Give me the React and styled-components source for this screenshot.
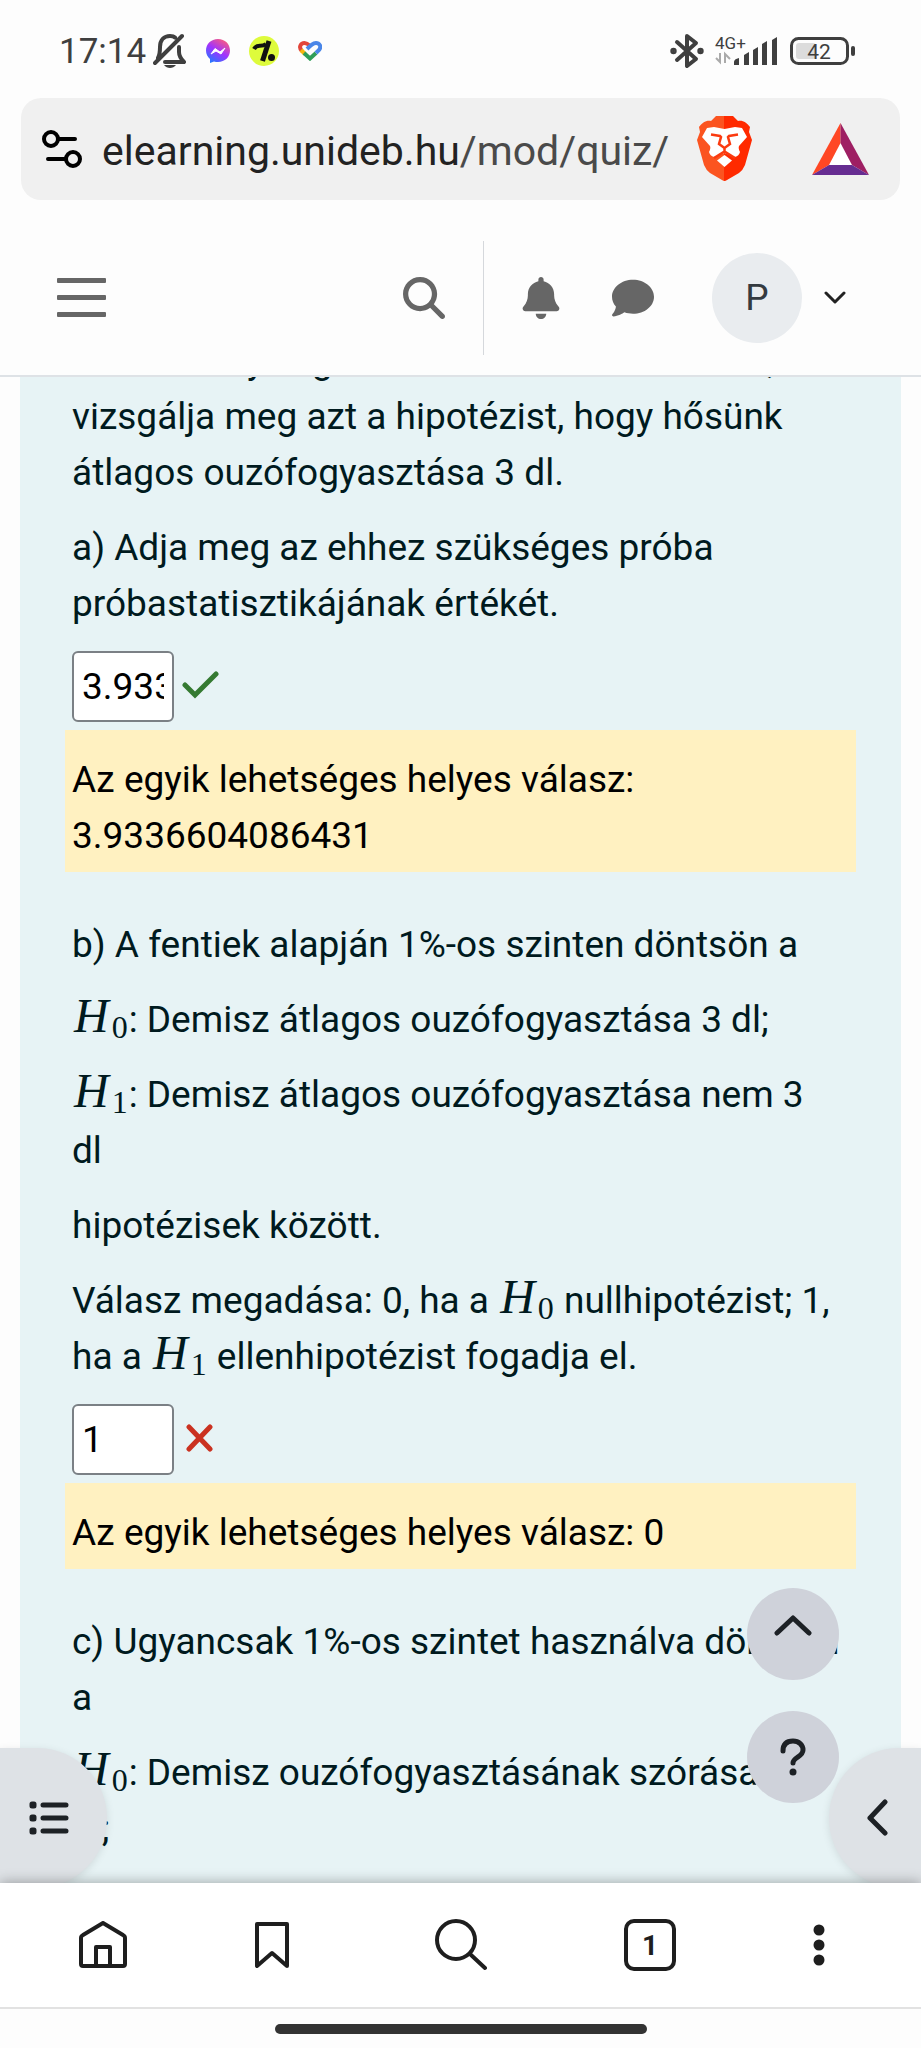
import React from "react";
import styled, { createGlobalStyle } from "styled-components";
import { FaBell, FaComment, FaMagnifyingGlass } from "react-icons/fa6";

const Global = createGlobalStyle`
  *, *::before, *::after { box-sizing: border-box; }
  body { margin: 0; background: #fdfdfd; font-family: Roboto, "Liberation Sans", sans-serif; }
  button, input { font: inherit; color: inherit; }
  button { border: 0; padding: 0; background: none; cursor: pointer; }
`;

const Screen = styled.div`
  height: 100vh;
  display: flex;
  flex-direction: column;
  overflow: hidden;
`;

const StatusBar = styled.div`
  display: flex;
  align-items: center;
  justify-content: space-between;
  height: 98px;
  padding: 4px 66px 0 59px;
  color: #3f3f3f;
`;

const StatusGroup = styled.div`
  display: flex;
  align-items: center;
  gap: ${(p) => p.$gap}px;
`;

const Clock = styled.time`
  padding-top: 2px;
  font-size: 35px;
  line-height: 40px;
`;

const AddressBar = styled.div`
  display: flex;
  align-items: center;
  height: 102px;
  margin: 0 21px;
  padding: 0 31px 0 21px;
  border-radius: 20px;
  background: #f0f0f0;
`;

const Address = styled.div`
  flex: 1;
  min-width: 0;
  margin-left: 20px;
  padding-top: 4px;
  overflow: hidden;
  white-space: nowrap;
  font-size: 41px;
  line-height: 50px;
  color: #4a4a4a;
  b { font-weight: 400; color: #222; }
`;

const Logo = styled.button`
  display: flex;
  margin-left: ${(p) => p.$space}px;
`;

const SiteHeader = styled.header`
  display: flex;
  align-items: center;
  flex: none;
  height: 177px;
  padding: 20px 75px 0 57px;
  border-bottom: 2px solid #dee2e6;
  color: #666;
`;

const Burger = styled.button`
  display: flex;
  flex-direction: column;
  gap: 12px;
  width: 49px;
  margin-right: auto;
  i { height: 5px; border-radius: 1px; background: #666; }
`;

const HeaderButton = styled.button`
  display: flex;
  align-items: center;
`;

const Notifications = styled.div`
  display: flex;
  gap: 50px;
`;

const Divider = styled.span`
  width: 1px;
  height: 114px;
  margin: 0 36px 0 38px;
  background: #d5d8dc;
`;

const UserMenu = styled(HeaderButton)`
  gap: 22px;
  margin-left: 58px;
  color: #222;
`;

const Avatar = styled.span`
  width: 90px;
  height: 90px;
  border-radius: 50%;
  background: #e9ecef;
  color: #343a40;
  font-size: 37px;
  line-height: 90px;
  text-align: center;
`;

const Viewport = styled.main`
  position: relative;
  flex: 1;
  min-height: 0;
  overflow: hidden;
`;

const Question = styled.article`
  min-height: 100%;
  margin: -44px 20px 0;
  padding: 0 60px 90px 52px;
  background: #e7f3f5;
  color: #001a1e;
  font-size: 37px;
  line-height: 56px;
`;

const Paragraph = styled.p`
  margin: 0 0 19px;
`;

const MathTerm = styled.span`
  padding-left: 2px;
  font: italic 48px/40px "Liberation Serif", serif;
  sub {
    margin: 0 1px 0 3px;
    font-style: normal;
    font-size: 32px;
    line-height: 1px;
    vertical-align: -6px;
  }
`;

const AnswerRow = styled.div`
  display: flex;
  align-items: center;
  gap: 8px;
  margin-bottom: 8px;
`;

const AnswerInput = styled.input`
  width: 102px;
  height: 71px;
  padding: 0 8px;
  border: 2px solid #7b8085;
  border-radius: 6px;
  background: #fff;
  color: #000;
`;

const Feedback = styled.div`
  margin: 0 -15px 45px -7px;
  padding: 22px 7px 8px;
  background: #fff1c1;
  color: #000;
`;

const RoundButton = styled.button`
  display: flex;
  align-items: center;
  justify-content: center;
  width: 92px;
  height: 92px;
  border-radius: 50%;
  background: #cfd2da;
  color: #1d2125;
`;

const FloatingStack = styled.div`
  position: absolute;
  right: 82px;
  bottom: 80px;
  display: grid;
  gap: 31px;
`;

const DrawerTab = styled.button`
  position: absolute;
  bottom: -5px;
  ${(p) => p.$side}: 0;
  display: flex;
  align-items: center;
  justify-content: ${(p) => (p.$side === "left" ? "flex-end" : "flex-start")};
  width: ${(p) => (p.$side === "left" ? 107 : 92)}px;
  height: 140px;
  padding: 0 38px;
  border-radius: ${(p) => (p.$side === "left" ? "0 70px 70px 0" : "70px 0 0 70px")};
  background: #dee2e6;
  box-shadow: 0 2px 8px rgba(0, 0, 0, 0.1);
  color: #1d2125;
  svg { flex: none; }
`;

const BrowserNav = styled.nav`
  position: relative;
  display: grid;
  grid-template-columns: 205fr 133fr 245fr 134fr 204fr;
  flex: none;
  height: 126px;
  border-bottom: 2px solid #e2e2e2;
  background: #fff;
  box-shadow: 0 -1px 12px rgba(0, 0, 0, 0.3);
`;

const NavButton = styled.button`
  display: flex;
  align-items: center;
  justify-content: center;
  color: #1e1e1e;
`;

const TabCount = styled.span`
  width: 52px;
  height: 52px;
  border: 4px solid #1e1e1e;
  border-radius: 10px;
  font-size: 28px;
  font-weight: 700;
  line-height: 46px;
  text-align: center;
`;

const GestureArea = styled.div`
  position: relative;
  display: flex;
  align-items: center;
  justify-content: center;
  flex: none;
  height: 39px;
  background: #fdfdfd;
`;

const GestureHandle = styled.span`
  width: 372px;
  height: 10px;
  border-radius: 5px;
  background: #333;
`;

const Stroke = ({ w, h, width = 4, children }) => (
  <svg width={w} height={h} viewBox={`0 0 ${w} ${h}`} fill="none" stroke="currentColor"
    strokeWidth={width} strokeLinecap="round" strokeLinejoin="round" aria-hidden="true">
    {children}
  </svg>
);

const MutedBell = () => (
  <Stroke w={34} h={36} width={4}>
    <path d="M2 30L29 3M5 25C7 21 7 18 7 14C7 7 11 3 17 3C19 3 21 3.500 22 4.500M26 14V19C26 23 27 25 31 29H12" />
    <path d="M11 32H23C20 36 14 36 11 32Z" fill="currentColor" stroke="none" />
  </Stroke>
);

const Messenger = () => (
  <svg width="24" height="24" viewBox="0 0 24 24" aria-hidden="true">
    <defs>
      <linearGradient id="msg" x1="0.2" y1="1" x2="0.8" y2="0">
        <stop offset="0" stopColor="#1f7bff" />
        <stop offset="0.5" stopColor="#a033ff" />
        <stop offset="1" stopColor="#ff5d78" />
      </linearGradient>
    </defs>
    <path fill="url(#msg)" d="M12 0C5 0 0 5 0 11.500C0 15 1.500 18 4 20V24L8 22.500C9.300 22.900 10.600 23 12 23C19 23 24 18 24 11.500S19 0 12 0Z" />
    <path d="M5 15L9 9.500L14 13L19 9L15 15L10 12Z" fill="#fff" stroke="#fff" strokeLinejoin="round" />
  </svg>
);

const LimeBadge = () => (
  <svg width="30" height="30" viewBox="0 0 30 30" fill="none" stroke="#111" aria-hidden="true">
    <circle cx="15" cy="15" r="15" fill="#defb3c" stroke="none" />
    <path d="M5 13C8 7 12 12 17 8" strokeWidth="4" />
    <path d="M20 5L13.500 25" strokeWidth="5" />
    <circle cx="22.500" cy="21.500" r="3.500" fill="#111" stroke="none" />
  </svg>
);

const HeartBadge = () => (
  <svg width="24" height="20" viewBox="0 0 24 20" fill="none" strokeWidth="4" aria-hidden="true">
    <path d="M4 10C0 6 3 2 6.500 2C9 2 11 4 12 5" stroke="#e2453a" />
    <path d="M3 9L7 13" stroke="#f6b70e" />
    <path d="M6 12L12 17.500L18 12" stroke="#2f9e58" />
    <path d="M18 12L21 9C24 5 21 2 18 2C15 2 13 4 9 8" stroke="#4a86e8" />
  </svg>
);

const Bluetooth = () => (
  <Stroke w={34} h={36} width={4}>
    <path d="M7 9L26 26L17 33V3L26 10L7 27" />
    <circle cx="3.500" cy="18" r="1.200" fill="currentColor" />
    <circle cx="30.500" cy="18" r="1.200" fill="currentColor" />
  </Stroke>
);

const Signal = () => (
  <svg width="64" height="32" viewBox="0 0 64 32" fill="#3f3f3f" overflow="visible" aria-hidden="true">
    <text x="0" y="14" fontSize="17" fontFamily="Roboto, sans-serif">4G+</text>
    <path d="M5 18V27L1 23M10 28V19L15 24" fill="none" stroke="#aaa" strokeWidth="2" />
    <path d="M19 30V27Q19 24 24 23V30ZM29 20L34 17V30H29ZM38 15L43 12V30H38ZM47 9L52 6V30H47ZM57 5L62 2V30H57Z" />
  </svg>
);

const Battery = () => (
  <svg width="65" height="28" viewBox="0 0 65 28" aria-hidden="true">
    <rect x="1.500" y="1.500" width="56" height="25" rx="7" fill="none" stroke="#3f3f3f" strokeWidth="3" />
    <rect x="6" y="6" width="20" height="16" rx="3" fill="#dcdcdc" />
    <rect x="61" y="9" width="4" height="10" rx="2" fill="#3f3f3f" />
    <text x="29" y="22" fontSize="21" textAnchor="middle" fill="#3f3f3f" fontFamily="Roboto, sans-serif">42</text>
  </svg>
);

const Brave = () => (
  <svg width="55" height="66" viewBox="0 0 55 66" aria-hidden="true">
    <defs>
      <linearGradient id="brave">
        <stop offset="0.5" stopColor="#fb5420" />
        <stop offset="0.5" stopColor="#ff2a00" />
      </linearGradient>
    </defs>
    <path fill="url(#brave)" d="M19 0H36L41 5C46 4 50 7 53 11L52 16L55 24L48 49Q46 54 42 57L30 64Q27.500 66 25 64L13 57Q9 54 7 49L0 24L3 16L2 11C5 7 9 4 14 5Z" />
    <path fill="#fff" d="M17 11L27.500 13L38 11L45 12L50 21L42 30Q41 32 43 36Q42 40 38 41L27.500 37L17 41Q13 40 12 36Q14 32 13 30L5 21L10 12Z" />
    <path fill="none" stroke="#fb3b10" strokeWidth="2.500" d="M14 18.500L23 20L24 21L22 28L27.500 32L33 28L31 21L32 20L41 18.500M27.500 32V36M17 42L27.500 35.500L38 42" />
    <path fill="#fff" d="M27.500 39L35 44.500L27.500 51L20 44.500Z" />
  </svg>
);

const BatTriangle = () => (
  <svg width="57" height="52" viewBox="0 0 57 52" aria-hidden="true">
    <path fill="#fff" d="M28.500 20L40 42H17Z" />
    <path fill="#ff4724" d="M28.500 0V20L17 42L0 52Z" />
    <path fill="#9e1f63" d="M28.500 0V20L40 42L57 52Z" />
    <path fill="#662d91" d="M0 52L17 42H40L57 52Z" />
  </svg>
);

const H = ({ n }) => <MathTerm>H<sub>{n}</sub></MathTerm>;

function Answer({ id, label, value, correct }) {
  return (
    <AnswerRow>
      <AnswerInput id={id} aria-label={label} defaultValue={value} readOnly />
      {correct ? (
        <svg width="37" height="32" viewBox="0 0 37 32" fill="none" stroke="#357a32" strokeWidth="5" strokeLinecap="round" role="img" aria-label="Helyes">
          <path d="M3 14L13 24L34 3" />
        </svg>
      ) : (
        <svg width="37" height="32" viewBox="0 0 37 32" fill="none" stroke="#ca3120" strokeWidth="5" strokeLinecap="round" role="img" aria-label="Hibás">
          <path d="M7 3L28 25M28 3L7 25" />
        </svg>
      )}
    </AnswerRow>
  );
}

export default function App() {
  return (
    <Screen>
      <Global />
      <StatusBar>
        <StatusGroup $gap={19}>
          <StatusGroup $gap={7}>
            <Clock>17:14</Clock>
            <MutedBell />
          </StatusGroup>
          <Messenger />
          <LimeBadge />
          <HeartBadge />
        </StatusGroup>
        <StatusGroup $gap={11}>
          <Bluetooth />
          <Signal />
          <Battery />
        </StatusGroup>
      </StatusBar>

      <AddressBar>
        <Stroke w={40} h={38} width={4}>
          <circle cx="9" cy="9" r="7" /><path d="M17 9H33M6 29H23" />
          <circle cx="31" cy="29" r="7" />
        </Stroke>
        <Address><b>elearning.unideb.hu</b>/mod/quiz/</Address>
        <Logo $space={20} aria-label="Brave"><Brave /></Logo>
        <Logo $space={60} aria-label="Rewards"><BatTriangle /></Logo>
      </AddressBar>

      <SiteHeader>
        <Burger aria-label="Menü"><i /><i /><i /></Burger>
        <HeaderButton aria-label="Keresés"><FaMagnifyingGlass size={42} /></HeaderButton>
        <Divider />
        <Notifications>
          <HeaderButton aria-label="Értesítések"><FaBell size={42} /></HeaderButton>
          <HeaderButton aria-label="Üzenetek"><FaComment size={42} /></HeaderButton>
        </Notifications>
        <UserMenu aria-label="Felhasználói menü">
          <Avatar>P</Avatar>
          <Stroke w={22} h={14} width={3}><path d="M2 2L11 11L20 2" /></Stroke>
        </UserMenu>
      </SiteHeader>

      <Viewport>
        <Question>
          <Paragraph>
            Adatok helyes gondos kezelése és mérése, vizsgálja meg azt a hipotézist, hogy hősünk átlagos ouzófogyasztása 3 dl.
          </Paragraph>
          <Paragraph>a) Adja meg az ehhez szükséges próba próbastatisztikájának értékét.</Paragraph>
          <Answer id="answer-a" label="Válasz a" value="3.9336604086431" correct />
          <Feedback>Az egyik lehetséges helyes válasz: 3.9336604086431</Feedback>
          <Paragraph>b) A fentiek alapján 1%-os szinten döntsön a</Paragraph>
          <Paragraph><H n={0} />: Demisz átlagos ouzófogyasztása 3 dl;</Paragraph>
          <Paragraph><H n={1} />: Demisz átlagos ouzófogyasztása nem 3 dl</Paragraph>
          <Paragraph>hipotézisek között.</Paragraph>
          <Paragraph>
            Válasz megadása: 0, ha a <H n={0} /> nullhipotézist; 1, ha a <H n={1} /> ellenhipotézist fogadja el.
          </Paragraph>
          <Answer id="answer-b" label="Válasz b" value="1" />
          <Feedback>Az egyik lehetséges helyes válasz: 0</Feedback>
          <Paragraph>c) Ugyancsak 1%-os szintet használva döntsön a</Paragraph>
          <Paragraph><H n={0} />: Demisz ouzófogyasztásának szórása 0,5 dl;</Paragraph>
        </Question>

        <FloatingStack>
          <RoundButton aria-label="Vissza a tetejére">
            <Stroke w={38} h={38} width={5}><path d="M3 18L19 3L35 18" /></Stroke>
          </RoundButton>
          <RoundButton aria-label="Súgó">
            <Stroke w={26} h={38} width={5}>
              <path d="M3 13C3 6 7 3 13 3S23 7 23 12C23 19 13 19 13 25" />
              <circle cx="13" cy="34" r="3.500" fill="currentColor" stroke="none" />
            </Stroke>
          </RoundButton>
        </FloatingStack>

        <DrawerTab $side="left" aria-label="Kurzusindex">
          <Stroke w={40} h={34} width={5}>
            <path d="M14 4H37M14 17H37M14 30H37" />
            <path d="M3 3H5V5H3ZM3 16H5V18H3ZM3 29H5V31H3Z" fill="currentColor" />
          </Stroke>
        </DrawerTab>
        <DrawerTab $side="right" aria-label="Blokkok megnyitása">
          <Stroke w={22} h={38} width={5}><path d="M18 3L3 19L18 34" /></Stroke>
        </DrawerTab>
      </Viewport>

      <BrowserNav>
        <NavButton aria-label="Kezdőlap">
          <Stroke w={48} h={48}>
            <path d="M24 2L4 14Q2 15 2 17V43Q2 45 4 45H44Q46 45 46 43V17Q46 15 44 14ZM17 45V26H31V45" />
          </Stroke>
        </NavButton>
        <NavButton aria-label="Könyvjelzők">
          <Stroke w={34} h={46}><path d="M2 2H32V44L17 31L2 44Z" /></Stroke>
        </NavButton>
        <NavButton aria-label="Keresés">
          <Stroke w={52} h={52}><circle cx="21" cy="21" r="19" /><path d="M35 35L50 49" /></Stroke>
        </NavButton>
        <NavButton aria-label="Lapok"><TabCount>1</TabCount></NavButton>
        <NavButton aria-label="Továbbiak">
          <svg width="12" height="42" viewBox="0 0 12 42" fill="currentColor" aria-hidden="true">
            <circle cx="6" cy="6" r="5.500" /><circle cx="6" cy="21" r="5.500" /><circle cx="6" cy="36" r="5.500" />
          </svg>
        </NavButton>
      </BrowserNav>
      <GestureArea><GestureHandle /></GestureArea>
    </Screen>
  );
}
